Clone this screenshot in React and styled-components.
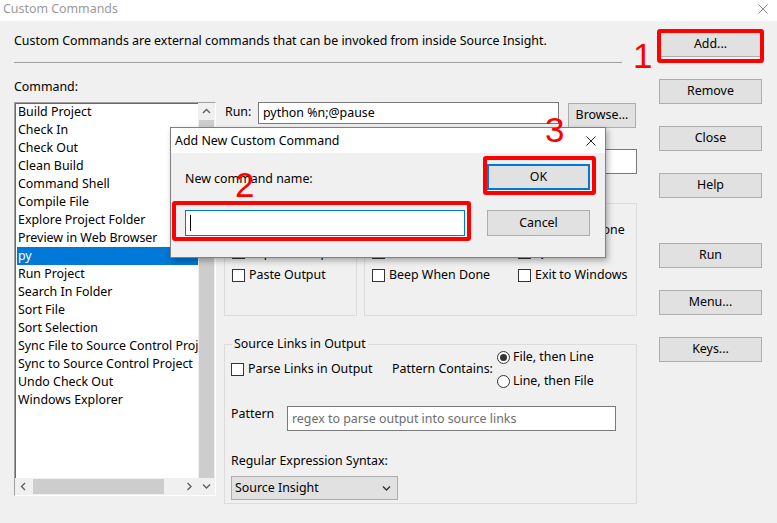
import React from 'react';
import styled, { createGlobalStyle } from 'styled-components';

const GlobalStyle = createGlobalStyle`
  html, body {
    margin: 0;
    padding: 0;
    background: #f0f0f0;
  }
  body {
    font-family: "Noto Sans", "Liberation Sans", sans-serif;
    font-size: 12.4px;
    line-height: 16px;
    color: #000;
  }
  * { box-sizing: border-box; }
`;

const Window = styled.div`
  position: relative;
  width: 777px;
  height: 523px;
  background: #f0f0f0;
  overflow: hidden;
`;

const TitleBar = styled.div`
  height: 21px;
  background: #fff;
  display: flex;
  align-items: center;
  justify-content: space-between;
  padding: 0 9px 3px 3px;
  color: #9a9a9a;
`;

const Body = styled.div`
  display: flex;
  gap: 22px;
  padding: 12px 15px 0 14px;
`;

const MainColumn = styled.div`
  width: 623px;
  display: flex;
  flex-direction: column;
`;

const Description = styled.div`
  height: 16px;
  white-space: nowrap;
`;

const Separator = styled.div`
  margin-top: 13px;
  width: 608px;
  height: 1px;
  background: #a0a0a0;
`;

const Label = styled.div`
  margin-top: ${({ $mt }) => $mt || 0}px;
  width: ${({ $w }) => ($w ? `${$w}px` : 'auto')};
  padding-left: ${({ $pl }) => $pl || 0}px;
  flex-shrink: 0;
  white-space: nowrap;
`;

const ContentRow = styled.div`
  margin-top: 7px;
  display: flex;
  gap: 8px;
`;

const ListBox = styled.div`
  width: 202px;
  height: 394px;
  display: flex;
  background: #fff;
  border: 1px solid;
  border-color: #a0a0a0 #ffffff #ffffff #a0a0a0;
  box-shadow: inset 1px 1px 0 #696969;
`;

const ListMain = styled.div`
  width: 183px;
  display: flex;
  flex-direction: column;
`;

const Items = styled.div`
  flex: 1;
  padding-left: 2px;
  overflow: hidden;
`;

const Item = styled.div`
  height: 18px;
  line-height: 18px;
  padding-left: 1px;
  white-space: nowrap;
  overflow: hidden;
  background: ${({ $selected }) => ($selected ? '#0078d7' : 'transparent')};
  color: ${({ $selected }) => ($selected ? '#fff' : '#000')};
`;

const HScroll = styled.div`
  height: 17px;
  display: flex;
  align-items: stretch;
  background: #f0f0f0;
`;

const VScroll = styled.div`
  width: 17px;
  display: flex;
  flex-direction: column;
  background: #f0f0f0;
`;

const ArrowCell = styled.div`
  width: 17px;
  height: 17px;
  flex-shrink: 0;
  display: flex;
  align-items: center;
  justify-content: center;
`;

const VThumb = styled.div`
  flex: 1;
  margin: 0 1px;
  background: #cdcdcd;
`;

const HTrack = styled.div`
  flex: 1;
  padding: 1px 0;
`;

const HThumb = styled.div`
  width: 131px;
  height: 100%;
  margin-left: 1px;
  background: #cdcdcd;
`;

const Panel = styled.div`
  width: 413px;
  display: flex;
  flex-direction: column;
`;

const FieldRow = styled.div`
  display: flex;
  align-items: flex-start;
  margin-top: ${({ $mt }) => $mt || 0}px;
`;

const TextInput = styled.div`
  width: ${({ $w }) => $w}px;
  height: ${({ $h }) => $h || 25}px;
  background: #fff;
  border: 1px solid ${({ $focus }) => ($focus ? '#0078d7' : '#7a7a7a')};
  color: ${({ $placeholder }) => ($placeholder ? '#6d6d6d' : '#000')};
  padding-left: 4px;
  display: flex;
  align-items: center;
  white-space: nowrap;
  overflow: hidden;
`;

const Button = styled.div`
  width: ${({ $w }) => $w || 103}px;
  height: ${({ $h }) => $h || 25}px;
  margin-top: ${({ $mt }) => $mt || 0}px;
  margin-left: ${({ $ml }) => $ml || 0}px;
  flex-shrink: 0;
  background: #e1e1e1;
  border: 1px solid ${({ $default }) => ($default ? '#0078d7' : '#adadad')};
  box-shadow: ${({ $default }) => ($default ? 'inset 0 0 0 1px #0078d7' : 'none')};
  display: flex;
  align-items: center;
  justify-content: center;
  padding-bottom: 1px;
  white-space: nowrap;
`;

const GroupRow = styled.div`
  margin-top: 21px;
  display: flex;
  gap: 7px;
`;

const Group = styled.fieldset`
  margin: 0;
  width: ${({ $w }) => $w}px;
  height: ${({ $h }) => $h}px;
  border: 1px solid #dcdcdc;
  padding: 0 6px;
  margin-top: ${({ $mt }) => $mt || 0}px;
  min-width: 0;
`;

const Legend = styled.legend`
  padding: 0 2px;
  margin-left: 1px;
  line-height: 16px;
  height: 16px;
`;

const CheckGrid = styled.div`
  margin-top: 8px;
  display: grid;
  grid-template-columns: ${({ $cols }) => $cols};
  grid-auto-rows: 22.5px;
  padding-left: 1px;
`;

const Check = styled.div`
  display: flex;
  align-items: center;
  gap: 4px;
  white-space: nowrap;
`;

const Box = styled.span`
  width: 13px;
  height: 13px;
  border: 1px solid #333;
  background: #fff;
  flex-shrink: 0;
`;

const Radio = styled.span`
  width: 13px;
  height: 13px;
  border: 1px solid #333;
  border-radius: 50%;
  background: #fff;
  flex-shrink: 0;
  display: flex;
  align-items: center;
  justify-content: center;
  &::after {
    content: '';
    width: 7px;
    height: 7px;
    border-radius: 50%;
    background: ${({ $on }) => ($on ? '#333' : 'transparent')};
  }
`;

const LinksRow = styled.div`
  margin-top: -7px;
  display: flex;
  align-items: center;
`;

const RadioStack = styled.div`
  display: flex;
  flex-direction: column;
`;

const RadioLine = styled.div`
  height: 24px;
  display: flex;
  align-items: center;
  gap: 3px;
`;

const Select = styled.div`
  margin-top: 7px;
  width: 167px;
  height: 24px;
  background: #e1e1e1;
  border: 1px solid #adadad;
  display: flex;
  align-items: center;
  justify-content: space-between;
  padding: 0 6px 0 3px;
`;

const SideColumn = styled.div`
  width: 103px;
  display: flex;
  flex-direction: column;
`;

const Dialog = styled.div`
  position: absolute;
  left: 170px;
  top: 127px;
  width: 436px;
  height: 131px;
  background: #f0f0f0;
  border: 1px solid #808080;
  box-shadow: 2px 3px 6px rgba(0, 0, 0, 0.3);
  display: flex;
  flex-direction: column;
`;

const DialogTitle = styled.div`
  height: 25px;
  background: #fff;
  display: flex;
  align-items: center;
  justify-content: space-between;
  padding: 0 9px 0 4px;
`;

const DialogBody = styled.div`
  padding: 11px 15px 0 14px;
  display: grid;
  grid-template-columns: 280px 103px;
  grid-template-rows: 26px 26px;
  column-gap: 22px;
  row-gap: 20px;
`;

const Caret = styled.span`
  width: 1px;
  height: 16px;
  background: #000;
`;

const Mark = styled.div`
  position: absolute;
  left: ${({ $x }) => $x}px;
  top: ${({ $y }) => $y}px;
  width: ${({ $w }) => $w}px;
  height: ${({ $h }) => $h}px;
  border: 4px solid #ff0000;
  border-radius: 3px;
`;

const Step = styled.div`
  position: absolute;
  left: ${({ $x }) => $x}px;
  top: ${({ $y }) => $y}px;
  font-family: "Liberation Sans", Arial, sans-serif;
  font-size: 35px;
  line-height: 35px;
  color: #ff0000;
`;

const Chevron = ({ dir = 'down', color = '#606060' }) => {
  const pts = {
    up: '1,5 4.5,1.5 8,5',
    down: '1,1.5 4.5,5 8,1.5',
    left: '5,1 1.5,4.5 5,8',
    right: '1.5,1 5,4.5 1.5,8',
  }[dir];
  const horiz = dir === 'left' || dir === 'right';
  return (
    <svg width={horiz ? 7 : 9} height={horiz ? 9 : 7} viewBox={horiz ? '0 0 7 9' : '0 0 9 7'}>
      <polyline points={pts} fill="none" stroke={color} strokeWidth="1.4" />
    </svg>
  );
};

const CloseIcon = ({ color, size = 10 }) => (
  <svg width={size} height={size} viewBox="0 0 10 10">
    <path d="M0.5 0.5 L9.5 9.5 M9.5 0.5 L0.5 9.5" stroke={color} strokeWidth="1" />
  </svg>
);

const commands = [
  'Build Project',
  'Check In',
  'Check Out',
  'Clean Build',
  'Command Shell',
  'Compile File',
  'Explore Project Folder',
  'Preview in Web Browser',
  'py',
  'Run Project',
  'Search In Folder',
  'Sort File',
  'Sort Selection',
  'Sync File to Source Control Project',
  'Sync to Source Control Project',
  'Undo Check Out',
  'Windows Explorer',
];

const CheckItem = ({ children }) => (
  <Check>
    <Box />
    <span>{children}</span>
  </Check>
);

const App = () => {
  return (
    <Window>
      <GlobalStyle />
      <TitleBar>
        <span>Custom Commands</span>
        <CloseIcon color="#8a8a8a" />
      </TitleBar>
      <Body>
        <MainColumn>
          <Description>
            Custom Commands are external commands that can be invoked from inside Source Insight.
          </Description>
          <Separator />
          <Label $mt={16}>Command:</Label>
          <ContentRow>
            <ListBox>
              <ListMain>
                <Items>
                  {commands.map((c) => (
                    <Item key={c} $selected={c === 'py'}>{c}</Item>
                  ))}
                </Items>
                <HScroll>
                  <ArrowCell><Chevron dir="left" /></ArrowCell>
                  <HTrack><HThumb /></HTrack>
                  <ArrowCell><Chevron dir="right" /></ArrowCell>
                </HScroll>
              </ListMain>
              <VScroll>
                <ArrowCell><Chevron dir="up" /></ArrowCell>
                <VThumb />
                <ArrowCell><Chevron dir="down" /></ArrowCell>
              </VScroll>
            </ListBox>

            <Panel>
              <FieldRow>
                <Label $w={34} $mt={2} $pl={1}>Run:</Label>
                <TextInput $w={301} $h={22}>python %n;@pause</TextInput>
                <Button $w={68} $ml={9} $mt={1}>Browse...</Button>
              </FieldRow>
              <FieldRow $mt={21}>
                <Label $w={34} $mt={4} $pl={1}>Dir:</Label>
                <TextInput $w={379} />
              </FieldRow>

              <GroupRow>
                <Group $w={133} $h={121}>
                  <Legend>Output</Legend>
                  <CheckGrid $cols="1fr">
                    <CheckItem>Iconic Window</CheckItem>
                    <CheckItem>Capture Output</CheckItem>
                    <CheckItem>Paste Output</CheckItem>
                  </CheckGrid>
                </Group>
                <Group $w={273} $h={121}>
                  <Legend>Control</Legend>
                  <CheckGrid $cols="146px 1fr">
                    <CheckItem>Save Files First</CheckItem>
                    <CheckItem>Wait until Done</CheckItem>
                    <CheckItem>Pause When Done</CheckItem>
                    <CheckItem>Quiet</CheckItem>
                    <CheckItem>Beep When Done</CheckItem>
                    <CheckItem>Exit to Windows</CheckItem>
                  </CheckGrid>
                </Group>
              </GroupRow>

              <Group $w={413} $h={168} $mt={20}>
                <Legend>Source Links in Output</Legend>
                <LinksRow>
                  <Label $w={161}>
                    <CheckItem>Parse Links in Output</CheckItem>
                  </Label>
                  <Label $w={105}>Pattern Contains:</Label>
                  <RadioStack>
                    <RadioLine><Radio $on /><span>File, then Line</span></RadioLine>
                    <RadioLine><Radio /><span>Line, then File</span></RadioLine>
                  </RadioStack>
                </LinksRow>
                <FieldRow $mt={13}>
                  <Label $w={56}>Pattern</Label>
                  <TextInput $w={329} $placeholder>regex to parse output into source links</TextInput>
                </FieldRow>
                <Label $mt={22}>Regular Expression Syntax:</Label>
                <Select>
                  <span>Source Insight</span>
                  <Chevron dir="down" color="#333" />
                </Select>
              </Group>
            </Panel>
          </ContentRow>
        </MainColumn>

        <SideColumn>
          <Button $mt={-1}>Add...</Button>
          <Button $mt={22}>Remove</Button>
          <Button $mt={22}>Close</Button>
          <Button $mt={22}>Help</Button>
          <Button $mt={45}>Run</Button>
          <Button $mt={22}>Menu...</Button>
          <Button $mt={22}>Keys...</Button>
        </SideColumn>
      </Body>

      <Dialog>
        <DialogTitle>
          <span>Add New Custom Command</span>
          <CloseIcon color="#222" />
        </DialogTitle>
        <DialogBody>
          <Label $mt={7}>New command name:</Label>
          <Button $default $h={26}>OK</Button>
          <TextInput $w={280} $h={26} $focus><Caret /></TextInput>
          <Button $h={26}>Cancel</Button>
        </DialogBody>
      </Dialog>

      <Mark $x={657} $y={29} $w={107} $h={34} />
      <Mark $x={483} $y={156} $w={113} $h={39} />
      <Mark $x={172} $y={201} $w={299} $h={40} />
      <Step $x={633} $y={38}>1</Step>
      <Step $x={235} $y={167}>2</Step>
      <Step $x={545} $y={112}>3</Step>
    </Window>
  );
};

export default App;
